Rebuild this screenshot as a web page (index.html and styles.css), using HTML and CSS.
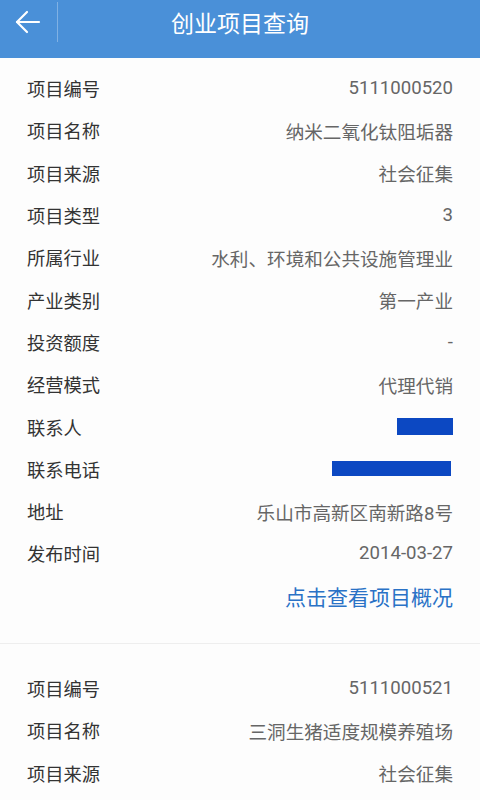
FILE: index.html
```html
<!DOCTYPE html>
<html lang="zh-CN">
<head>
    <meta charset="UTF-8">
    <meta name="viewport" content="width=device-width, initial-scale=1.0">
    <title>创业项目查询</title>
    <link rel="stylesheet" href="styles.css">
</head>
<body>

    <header class="topbar">
        <a class="back" href="#">
            <svg width="26" height="24" viewBox="0 0 26 24" fill="none" stroke="#fff" stroke-width="2.2" stroke-linecap="round" stroke-linejoin="round">
                <path d="M24 12H2"/>
                <path d="M12 2L2 12l10 10"/>
            </svg>
        </a>
        <div class="sep"></div>
        <h1>创业项目查询</h1>
    </header>

    <div class="list">
        <div class="card first">
            <div class="row"><span class="label">项目编号</span><span class="value">5111000520</span></div>
            <div class="row"><span class="label">项目名称</span><span class="value">纳米二氧化钛阻垢器</span></div>
            <div class="row"><span class="label">项目来源</span><span class="value">社会征集</span></div>
            <div class="row"><span class="label">项目类型</span><span class="value">3</span></div>
            <div class="row"><span class="label">所属行业</span><span class="value">水利、环境和公共设施管理业</span></div>
            <div class="row"><span class="label">产业类别</span><span class="value">第一产业</span></div>
            <div class="row"><span class="label">投资额度</span><span class="value">-</span></div>
            <div class="row"><span class="label">经营模式</span><span class="value">代理代销</span></div>
            <div class="row"><span class="label">联系人</span><span class="mask short"></span></div>
            <div class="row"><span class="label">联系电话</span><span class="mask long"></span></div>
            <div class="row"><span class="label">地址</span><span class="value">乐山市高新区南新路8号</span></div>
            <div class="row"><span class="label">发布时间</span><span class="value">2014-03-27</span></div>
            <div class="row link-row"><a class="more" href="#">点击查看项目概况</a></div>
        </div>

        <div class="card">
            <div class="row"><span class="label">项目编号</span><span class="value">5111000521</span></div>
            <div class="row"><span class="label">项目名称</span><span class="value">三洞生猪适度规模养殖场</span></div>
            <div class="row"><span class="label">项目来源</span><span class="value">社会征集</span></div>
        </div>
    </div>

</body>
</html>
```

FILE: styles.css
```css
body {
    margin: 0;
    font-family: "Noto Sans CJK SC", "Noto Sans", sans-serif;
    background-color: #fdfdfd;
}
.topbar {
    height: 58px;
    background-color: #4a90d8;
    position: relative;
}
.back {
    position: absolute;
    left: 15px;
    top: 10px;
}
.sep {
    position: absolute;
    left: 57px;
    top: 2px;
    width: 1px;
    height: 40px;
    background-color: rgba(255, 255, 255, 0.3);
}
.topbar h1 {
    margin: 0;
    padding-top: 6px;
    line-height: 32px;
    text-align: center;
    color: #fff;
    font-size: 23px;
    font-weight: normal;
}
.card {
    padding: 23px 27px 0 27px;
    border-top: 1px solid #eeeeee;
}
.card.first {
    padding: 9px 27px 26px 27px;
    border-top: none;
}
.row {
    height: 42.3px;
    display: flex;
    align-items: center;
    justify-content: space-between;
    font-size: 18.3px;
}
.label {
    color: #333;
}
.value {
    color: #666;
    font-family: Roboto, "Noto Sans CJK SC", sans-serif;
    font-size: 18.6px;
}
.mask {
    display: block;
    background-color: #0c48c2;
}
.mask.short {
    width: 56px;
    height: 17px;
}
.mask.long {
    width: 119px;
    height: 15px;
    margin-right: 2px;
}
.link-row {
    justify-content: flex-end;
}
.more {
    color: #2a72c6;
    font-size: 21px;
    text-decoration: none;
}
```
